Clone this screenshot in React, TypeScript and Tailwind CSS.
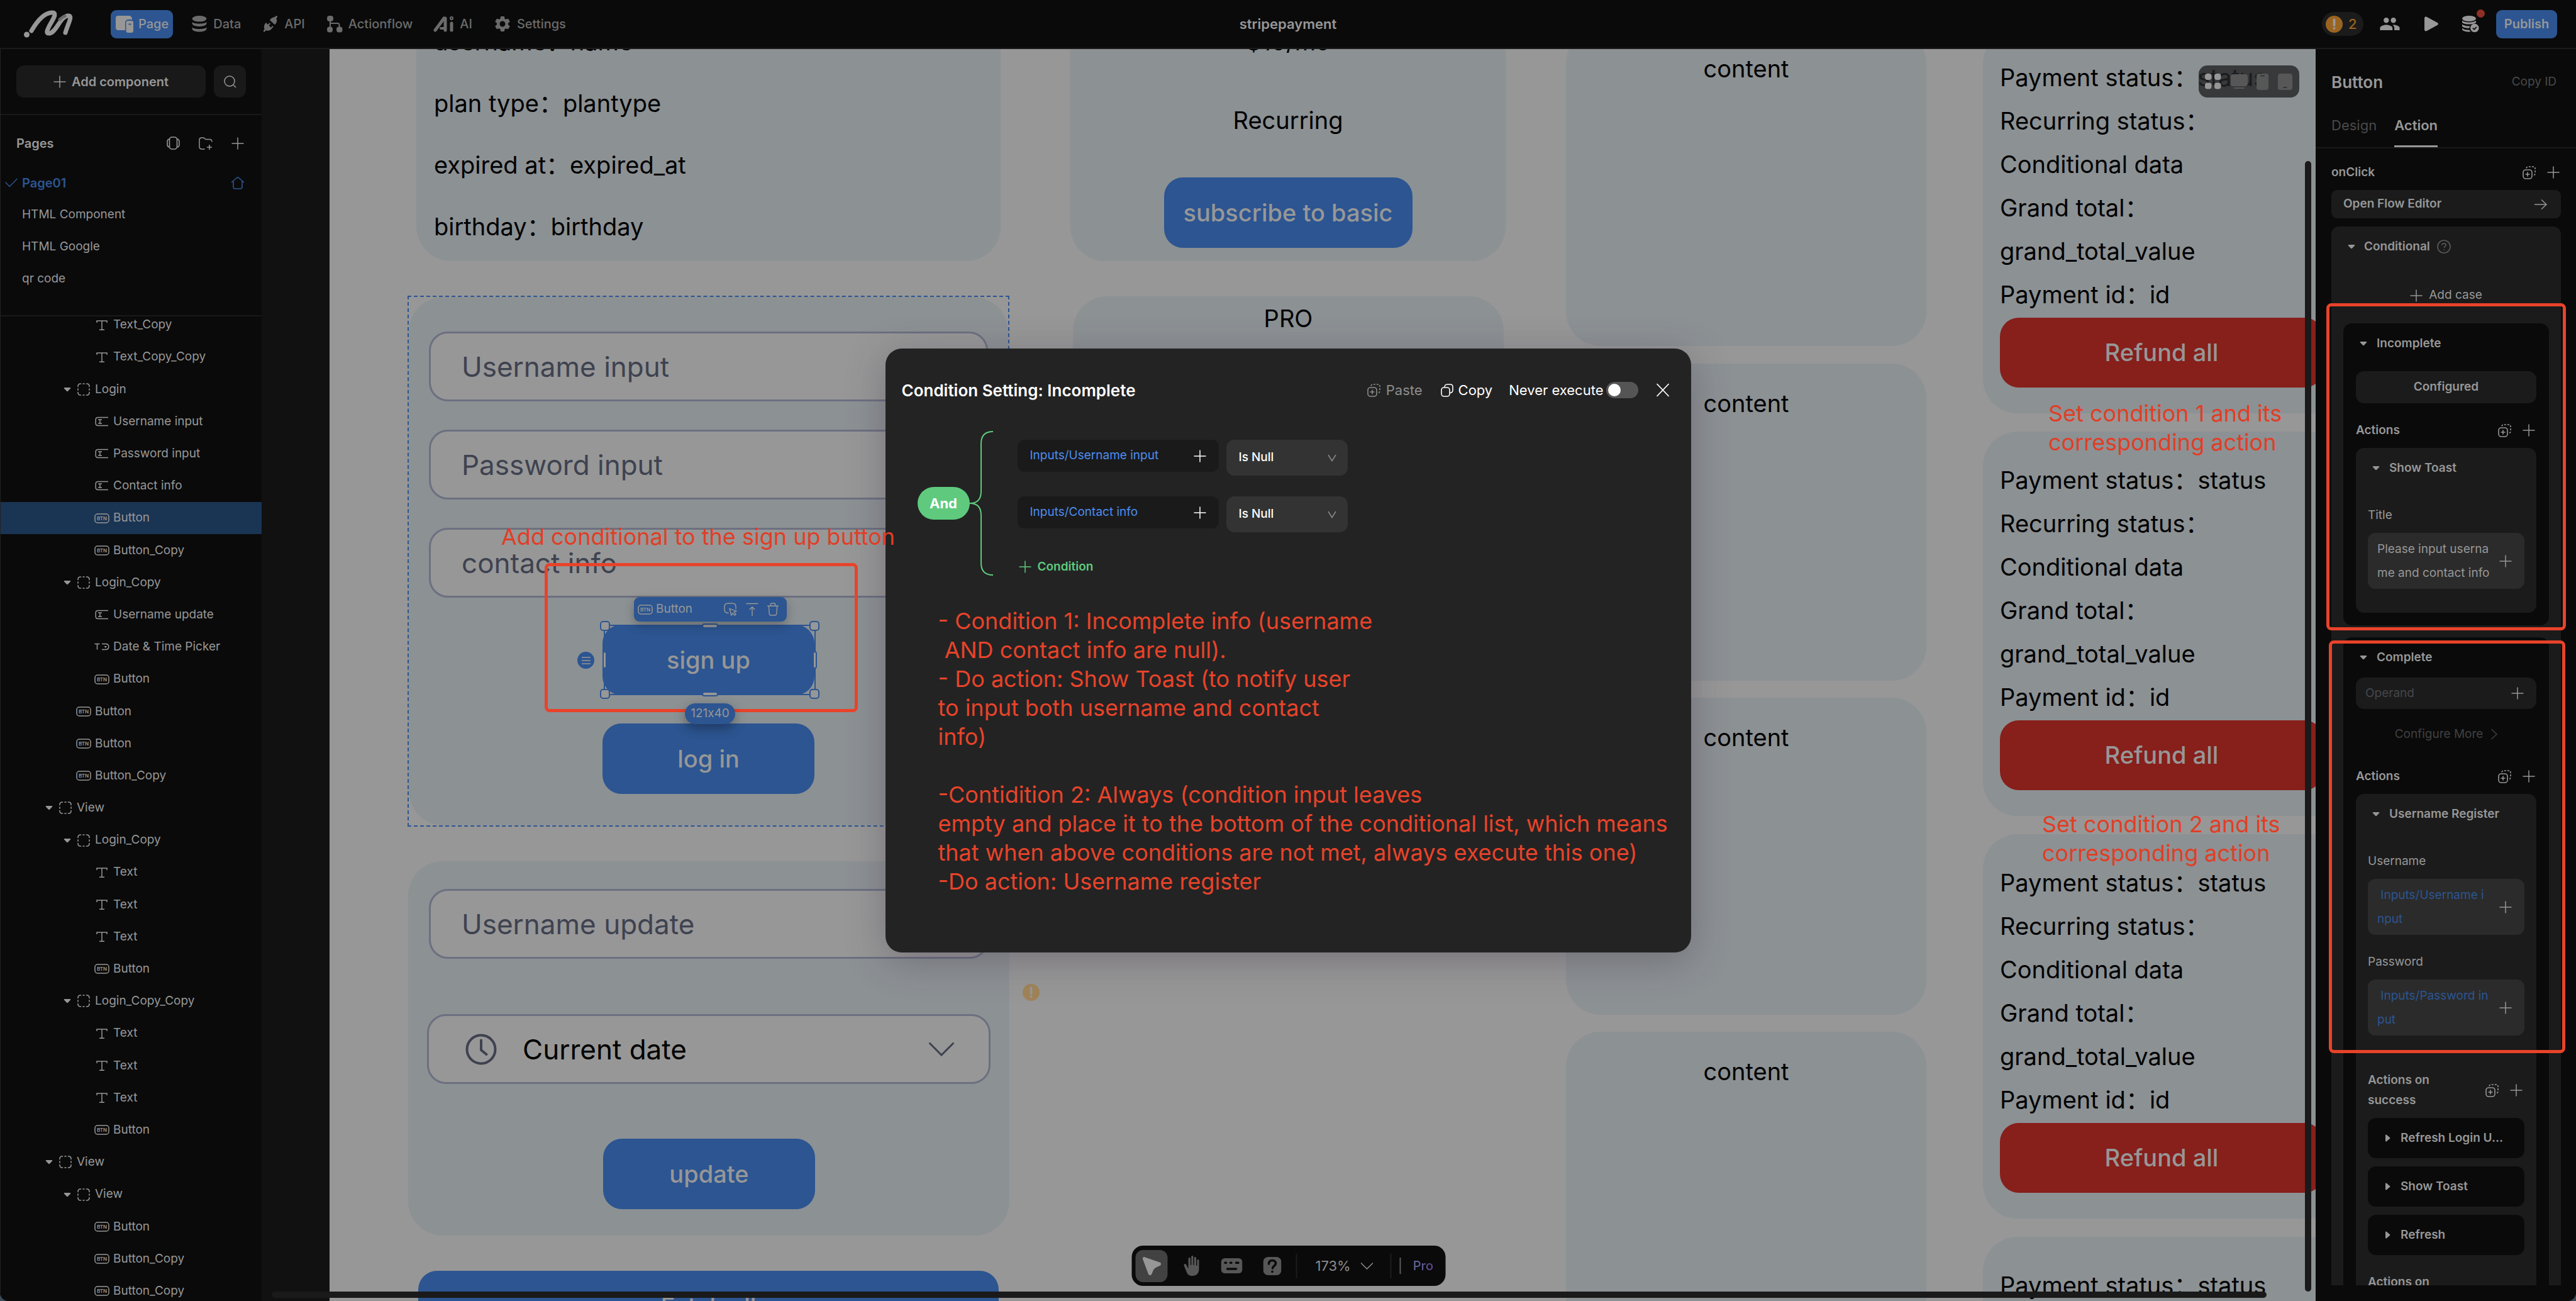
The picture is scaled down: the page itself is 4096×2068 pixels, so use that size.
import React from "react";
import { MdPeople, MdSettings } from "react-icons/md";
import { IoHandRight } from "react-icons/io5";

type IconProps = { className?: string };

/* ---------- icons ---------- */

function Plus({ className = "size-[20px]" }: IconProps) {
  return (
    <svg viewBox="0 0 20 20" className={className} fill="none" stroke="currentColor" strokeWidth="1.5" aria-hidden="true">
      <path d="M10 0.5v19M0.5 10h19" />
    </svg>
  );
}

function Caret({ className = "size-[16px]" }: IconProps) {
  return (
    <svg viewBox="0 0 16 16" className={className} fill="currentColor" aria-hidden="true">
      <path d="M3.6 5h8.8c.9 0 1.1.8.6 1.4L9.2 10.600c-.7.7-1.700.7-2.400 0L3 6.400C2.500 5.800 2.700 5 3.600 5z" />
    </svg>
  );
}

function CaretRight() {
  return (
    <svg viewBox="0 0 16 16" className="size-[16px]" fill="currentColor" aria-hidden="true">
      <path d="M4 3.200v9.600c0 .8.8 1 1.400.6l5.400-4.300c.8-.6.8-1.600 0-2.200L5.400 2.600C4.800 2.200 4 2.400 4 3.200z" />
    </svg>
  );
}

function PasteIcon() {
  return (
    <svg viewBox="0 0 21 21" className="size-[21px]" fill="none" stroke="currentColor" strokeWidth="1.6" aria-hidden="true">
      <rect x="1" y="6" width="14" height="14" rx="4" />
      <path d="M8 9.500v7M4.500 13h7" />
      <path d="M6 3.500C6.300 2 7.300 1 9 1h8c2 0 3 1.200 3 3v7c0 2-.8 3.300-2.500 3.600" strokeDasharray="3 2" />
    </svg>
  );
}

function CopyIcon() {
  return (
    <svg viewBox="0 0 20 21" className="h-[21px] w-[20px]" fill="none" stroke="currentColor" strokeWidth="1.6" aria-hidden="true">
      <rect x="1" y="6" width="13" height="14" rx="4" />
      <path d="M6 5.500C6 3 7.500 1 10 1h5c2.600 0 4 1.600 4 4v5c0 2.500-1.600 4.600-5 4.600" />
    </svg>
  );
}

function Logo() {
  return (
    <svg viewBox="0 0 78 44" className="h-[44px] w-[78px]" fill="none" strokeLinecap="round" strokeLinejoin="round" aria-hidden="true">
      <circle cx="4.500" cy="39" r="4.500" fill="#979797" />
      <path d="M12 33C19 21 31 4 45 4C54 4 46 15 41 24C37 32 34 38 41 37C52 35 58 9 71 9C78 9 70 22 66 36" stroke="#979797" strokeWidth="7" />
      <path d="M57 15c3-3 5-4.500 8-5.500" stroke="#6a6a6a" strokeWidth="5" />
    </svg>
  );
}

function PageIcon() {
  return (
    <svg viewBox="0 0 30 28" className="h-[28px] w-[30px]" fill="currentColor" aria-hidden="true">
      <path d="M5 1h17a5 5 0 0 1 5 5v1h-6a5 5 0 0 0-5 5v12H5a4 4 0 0 1-4-4V5a4 4 0 0 1 4-4z" />
      <path fillRule="evenodd" d="M20.500 9H26a3 3 0 0 1 3 3v13a3 3 0 0 1-3 3h-5.500a3 3 0 0 1-3-3V12a3 3 0 0 1 3-3zm1 4.500v2h4v-2z" />
    </svg>
  );
}

function DataIcon() {
  return (
    <svg viewBox="0 0 28 28" className="size-[28px]" fill="currentColor" aria-hidden="true">
      <ellipse cx="14" cy="5.800" rx="11.500" ry="4.800" />
      <path d="M2.500 11c3 3.500 20 3.500 23 0 .8 5-4 7-11.500 7S1.700 16 2.500 11z" />
      <path d="M2.500 19.500c3 3.500 20 3.500 23 0 .8 5-4 7-11.500 7s-12.300-2-11.500-7z" />
    </svg>
  );
}

function ApiIcon() {
  return (
    <svg viewBox="0 0 28 28" className="size-[28px]" fill="currentColor" aria-hidden="true">
      <path d="M13 8c1.500-2.500 4.500-5 7.500-4.800L23.500.8l1.800 1.600-2 3.200c1.800 3.600.5 7.600-2.500 9.600z" />
      <path d="M7 12l3 3 2.500-2.700 1.500 1.500-2.300 2.800 3 3.200 2.500-2.700 1.500 1.500-2.600 3c-1.800 2.800-6 4.200-9.200 2.600L4.200 27l-1.700-1.700 2.200-3C3 18.600 4.200 14.500 7 12z" />
    </svg>
  );
}

function FlowIcon() {
  return (
    <svg viewBox="0 0 28 28" className="size-[28px]" fill="currentColor" aria-hidden="true">
      <rect x="2" y="1" width="10" height="9" rx="4" />
      <rect x="2" y="18.500" width="9" height="9" rx="4" />
      <rect x="17" y="18.500" width="9.500" height="9" rx="4" />
      <path d="M7 9v10M7 13h11.500c2 0 3 1 3 3v3" fill="none" stroke="currentColor" strokeWidth="2" />
    </svg>
  );
}

function AiIcon() {
  return (
    <svg viewBox="0 0 34 26" className="h-[26px] w-[34px]" fill="none" stroke="currentColor" strokeLinecap="round" strokeLinejoin="round" aria-hidden="true">
      <path d="M3 23L17 4" strokeWidth="5" />
      <path d="M19 4v19" strokeWidth="5" />
      <path d="M12 20h7" strokeWidth="4" />
      <path d="M29 12v11" strokeWidth="5" />
      <circle cx="29" cy="4" r="1" strokeWidth="4" />
    </svg>
  );
}

function WarnIcon({ className = "size-[27px]" }: IconProps) {
  return (
    <svg viewBox="0 0 27 27" className={className} aria-hidden="true">
      <circle cx="13.500" cy="13.500" r="13.500" fill="currentColor" />
      <path d="M13.500 6.500v8.500M13.500 19.800v.3" stroke="#979797" strokeWidth="3.800" strokeLinecap="round" />
    </svg>
  );
}

function DbCheckIcon() {
  return (
    <svg viewBox="0 0 28 28" className="size-[28px]" aria-hidden="true">
      <g fill="#979797">
        <ellipse cx="12" cy="5.500" rx="11" ry="4.500" />
        <path d="M1 8.500c3 4 19 4 22 0v3.200c-3.500 3.800-18.500 3.800-22 0z" />
        <path d="M1 14.500c2.500 2.600 8 3.300 12.500 3-.8 1-1 2.200-1 3.200C8 21 3 20 1 18z" />
        <path d="M1 20.800c2.500 2.400 7 3 11.500 3 .5 1.200 1.200 2 2 2.600C9 27 2 26 1 22.800z" />
        <circle cx="20.800" cy="20.500" r="6.800" />
      </g>
      <path d="M17.800 20.600l2.300 2.200 3.800-3.900" fill="none" stroke="#0a0a0a" strokeWidth="1.800" />
    </svg>
  );
}

function BtnIcon() {
  return (
    <svg viewBox="0 0 24 16" className="h-[16px] w-[24px]" aria-hidden="true">
      <rect x="1" y="1" width="22" height="14" rx="4" fill="none" stroke="currentColor" strokeWidth="1.5" />
      <text x="12" y="11" textAnchor="middle" fontSize="8" fontWeight="600" fill="currentColor">BTN</text>
    </svg>
  );
}

function TextIcon() {
  return (
    <svg viewBox="0 0 20 18" className="h-[18px] w-[20px]" fill="none" stroke="currentColor" strokeWidth="1.500" aria-hidden="true">
      <path d="M2 5V2h16v3M10 2v14M6 16.200h8" />
    </svg>
  );
}

function FieldIcon() {
  return (
    <svg viewBox="0 0 22 16" className="h-[16px] w-[22px]" fill="none" stroke="currentColor" strokeWidth="1.500" aria-hidden="true">
      <path d="M21 1.500H5C2.500 1.500 1.200 2.500 1.200 5v6c0 2.500 1.300 3.500 3.800 3.500h16M5 5h6M8 5v6M5 11h6" />
    </svg>
  );
}

function ViewIcon() {
  return (
    <svg viewBox="0 0 20 20" className="size-[20px]" fill="none" stroke="currentColor" strokeWidth="1.600" strokeLinecap="round" aria-hidden="true">
      <path d="M1 5.500V5c0-2.500 1.500-4 4-4h.5M14.500 1h.5c2.500 0 4 1.500 4 4v.5M19 14.500v.5c0 2.500-1.500 4-4 4h-.5M5.500 19H5c-2.500 0-4-1.500-4-4v-.5M9 1h2M9 19h2M1 9v2M19 9v2" />
    </svg>
  );
}

function PickerIcon() {
  return (
    <svg viewBox="0 0 24 14" className="h-[14px] w-[24px]" fill="none" stroke="currentColor" strokeWidth="1.500" aria-hidden="true">
      <path d="M0.500 2.500h8M4.500 2.500v9M12 2.500h6c3 0 4.800 1.500 4.800 4.500S21 11.500 18 11.500h-6" />
      <path d="M15.500 6h4.500l-2.200 3z" fill="currentColor" stroke="none" />
    </svg>
  );
}

/* ---------- header ---------- */

const navItems = [
  { label: "Data", icon: <DataIcon /> },
  { label: "API", icon: <ApiIcon /> },
  { label: "Actionflow", icon: <FlowIcon /> },
  { label: "AI", icon: <AiIcon /> },
  { label: "Settings", icon: <MdSettings className="size-[30px]" /> },
];

function Header() {
  return (
    <header className="relative flex h-[78px] shrink-0 items-center justify-between border-b-2 border-[#1b1b1b] bg-[#0a0a0a] pr-[30px] pl-[38px] text-[20px]">
      <nav className="flex items-center">
        <Logo />
        <button className="ml-[60px] flex h-[45px] items-center gap-[7px] rounded-[9px] bg-[#2c5591] px-[7px] font-medium text-[#979797]">
          <PageIcon />
          Page
        </button>
        <div className="ml-[28px] flex items-center gap-[33px]">
          {navItems.map((item) => (
            <button key={item.label} className="flex items-center gap-[8px] font-medium text-[#6b6b6b]">
              {item.icon}
              {item.label}
            </button>
          ))}
        </div>
      </nav>
      <h1 className="absolute left-1/2 -translate-x-1/2 text-[22px] font-semibold text-[#979797]">stripepayment</h1>
      <div className="flex items-center">
        <button className="flex h-[38px] w-[66px] items-center gap-[9px] rounded-full bg-[#1b1b1b] pl-[6px] text-[22px] font-medium text-[#9a6420]">
          <WarnIcon />
          2
        </button>
        <button aria-label="Members" className="ml-[25px] text-[#979797]">
          <MdPeople className="size-[34px]" />
        </button>
        <button aria-label="Preview" className="ml-[38px] text-[#979797]">
          <svg viewBox="0 0 22 24" className="h-[24px] w-[22px]" fill="currentColor" aria-hidden="true">
            <path d="M0 3C0 .8 1.500 0 3.500.8l17 9.200c2 1.200 2 2.800 0 4l-17 9.200C1.500 24 0 23.200 0 21z" />
          </svg>
        </button>
        <button aria-label="Sync status" className="relative ml-[37px]">
          <DbCheckIcon />
          <span className="absolute -top-[9px] -right-[9px] size-[13px] rounded-full bg-[#8f3026]" />
        </button>
        <button className="ml-[27px] h-[45px] w-[97px] rounded-[9px] bg-[#2c5591] font-semibold text-[#979797]">Publish</button>
      </div>
    </header>
  );
}

/* ---------- left sidebar ---------- */

type Kind = "text" | "view" | "field" | "btn" | "picker";
type Row = { depth: 1 | 2 | 3; kind: Kind; label: string; selected?: boolean };

const tree: Row[] = [
  { depth: 3, kind: "text", label: "Text_Copy" },
  { depth: 3, kind: "text", label: "Text_Copy_Copy" },
  { depth: 2, kind: "view", label: "Login" },
  { depth: 3, kind: "field", label: "Username input" },
  { depth: 3, kind: "field", label: "Password input" },
  { depth: 3, kind: "field", label: "Contact info" },
  { depth: 3, kind: "btn", label: "Button", selected: true },
  { depth: 3, kind: "btn", label: "Button_Copy" },
  { depth: 2, kind: "view", label: "Login_Copy" },
  { depth: 3, kind: "field", label: "Username update" },
  { depth: 3, kind: "picker", label: "Date & Time Picker" },
  { depth: 3, kind: "btn", label: "Button" },
  { depth: 2, kind: "btn", label: "Button" },
  { depth: 2, kind: "btn", label: "Button" },
  { depth: 2, kind: "btn", label: "Button_Copy" },
  { depth: 1, kind: "view", label: "View" },
  { depth: 2, kind: "view", label: "Login_Copy" },
  { depth: 3, kind: "text", label: "Text" },
  { depth: 3, kind: "text", label: "Text" },
  { depth: 3, kind: "text", label: "Text" },
  { depth: 3, kind: "btn", label: "Button" },
  { depth: 2, kind: "view", label: "Login_Copy_Copy" },
  { depth: 3, kind: "text", label: "Text" },
  { depth: 3, kind: "text", label: "Text" },
  { depth: 3, kind: "text", label: "Text" },
  { depth: 3, kind: "btn", label: "Button" },
  { depth: 1, kind: "view", label: "View" },
  { depth: 2, kind: "view", label: "View" },
  { depth: 3, kind: "btn", label: "Button" },
  { depth: 3, kind: "btn", label: "Button_Copy" },
  { depth: 3, kind: "btn", label: "Button_Copy" },
];

const indent = { 1: "pl-[69px]", 2: "pl-[98px]", 3: "pl-[127px]" };

const kindIcon: Record<Kind, React.ReactNode> = {
  text: <TextIcon />,
  view: <ViewIcon />,
  field: <FieldIcon />,
  btn: <BtnIcon />,
  picker: <PickerIcon />,
};

function TreeRow({ row }: { row: Row }) {
  return (
    <button
      className={`flex h-[51px] w-full items-center gap-[4px] text-left ${indent[row.depth]} ${row.selected ? "bg-[#1a3453]" : ""}`}
    >
      <span className="w-[16px]">{row.kind === "view" && <Caret />}</span>
      <span className="flex w-[28px] justify-center">{kindIcon[row.kind]}</span>
      {row.label}
    </button>
  );
}

function Sidebar() {
  return (
    <aside className="flex w-[416px] shrink-0 flex-col overflow-hidden border-l border-[#222] bg-[#0a0a0a] text-[19px] text-[#979797]">
      <div className="flex gap-[13px] border-b-2 border-[#191919] px-[25px] py-[26px]">
        <button className="flex h-[51px] flex-1 items-center justify-center gap-[9px] rounded-[12px] bg-[#191919] text-[20px] font-semibold">
          <Plus />
          Add component
        </button>
        <button aria-label="Search" className="flex size-[51px] items-center justify-center rounded-[12px] bg-[#191919]">
          <svg viewBox="0 0 20 20" className="size-[20px]" fill="none" stroke="currentColor" strokeWidth="1.500" aria-hidden="true">
            <circle cx="9" cy="9" r="8" />
            <path d="M14.800 14.800L19 19" />
          </svg>
        </button>
      </div>
      <div className="flex h-[320px] shrink-0 flex-col border-b-2 border-[#191919] pt-[19px]">
        <div className="flex h-[51px] items-center justify-between pr-[28px] pl-[25px]">
          <h2 className="text-[20px] font-semibold">Pages</h2>
          <div className="flex gap-[30px]">
            <button aria-label="Page template">
              <svg viewBox="0 0 21 21" className="size-[21px]" fill="none" stroke="currentColor" strokeWidth="1.600" aria-hidden="true">
                <rect x="4.500" y="1" width="12" height="19" rx="4" />
                <path d="M4.500 4C2 4.500 1 5.500 1 8v5c0 2.500 1 3.500 3.500 4M16.500 4C19 4.500 20 5.500 20 8v5c0 2.500-1 3.500-3.500 4" />
              </svg>
            </button>
            <button aria-label="New folder">
              <svg viewBox="0 0 22 22" className="size-[22px]" fill="none" stroke="currentColor" strokeWidth="1.500" aria-hidden="true">
                <path d="M9.500 20H5c-3 0-4-1.200-4-4V5.500C1 3 2 2 4.500 2H8l3 2.500h6c2.800 0 4 1 4 4M17 13v8M13 17h8" />
              </svg>
            </button>
            <button aria-label="New page">
              <Plus />
            </button>
          </div>
        </div>
        <div className="mt-[12px] flex flex-col">
          <button className="flex h-[51px] items-center pr-[27px] pl-[6px] font-semibold text-[#2c5591]">
            <svg viewBox="0 0 22 16" className="h-[15px] w-[22px]" fill="none" stroke="currentColor" strokeWidth="1.500" aria-hidden="true">
              <path d="M1 7l7 7.500L21 1" />
            </svg>
            <span className="ml-[6px] text-[20px]">Page01</span>
            <svg viewBox="0 0 22 20" className="ml-auto h-[20px] w-[22px]" fill="none" stroke="currentColor" strokeWidth="1.600" aria-hidden="true">
              <path d="M1 9L9 2c1.300-1.100 2.700-1.100 4 0l8 7M4 7v9c0 2 1 3 3 3h8c2 0 3-1 3-3V7" />
            </svg>
          </button>
          {["HTML Component", "HTML Google", "qr code"].map((p) => (
            <button key={p} className="h-[51px] pl-[34px] text-left">
              {p}
            </button>
          ))}
        </div>
      </div>
      <div className="flex min-h-0 flex-1 flex-col overflow-hidden">
        <div className="-mt-[12px] -mb-[10px] flex flex-1 flex-col justify-between">
          {tree.map((row, i) => (
            <TreeRow key={i} row={row} />
          ))}
        </div>
      </div>
    </aside>
  );
}

/* ---------- canvas ---------- */

const card = "absolute rounded-[55px] bg-[#8c9194]";
const blueButton = "rounded-[30px] bg-[#2c5591] text-[38px] font-medium text-[#979797]";
const field = "block h-[111px] w-full rounded-[30px] border-[3px] border-[#6c7080] bg-[#979797]";

function CanvasInput({ label }: { label: string }) {
  return (
    <input
      aria-label={label}
      placeholder={label}
      className={`${field} px-[49px] text-[44px] text-[#3e4250] placeholder:text-[#3e4250] placeholder:opacity-100`}
    />
  );
}

const paymentLines = [
  "Payment status：status",
  "Recurring status：",
  "Conditional data",
  "Grand total：",
  "grand_total_value",
  "Payment id：id",
];

function PaymentCard({ className }: { className: string }) {
  return (
    <section className={`${card} left-[2629px] h-[611px] w-[600px] px-[27px] pt-[43px] ${className}`}>
      <div className="text-[38px] leading-[69px] text-black">
        {paymentLines.map((l) => (
          <p key={l}>{l}</p>
        ))}
      </div>
      <button className="mt-[2px] h-[111px] w-[514px] rounded-[30px] bg-[#871f1b] text-[38px] font-medium text-[#979797]">
        Refund all
      </button>
    </section>
  );
}

function ContentCard({ className }: { className: string }) {
  return (
    <section className={`${card} left-[1966px] h-[504px] w-[573px] pt-[39px] text-center text-[38px] leading-[48px] text-black ${className}`}>
      content
    </section>
  );
}

const corners = [
  "-top-[8px] -left-[8px]",
  "-top-[8px] -right-[8px]",
  "-bottom-[8px] -left-[8px]",
  "-bottom-[8px] -right-[8px]",
];
const edges = [
  "-top-[4px] left-1/2 h-[8px] w-[26px] -translate-x-1/2",
  "-bottom-[4px] left-1/2 h-[8px] w-[26px] -translate-x-1/2",
  "top-1/2 -left-[4px] h-[28px] w-[7px] -translate-y-1/2",
  "top-1/2 -right-[4px] h-[28px] w-[7px] -translate-y-1/2",
];

function LoginCard() {
  return (
    <section className="absolute top-[392px] left-[124px] h-[844px] w-[957px] border-2 border-dashed border-[#2c5591]">
      <div className="flex h-full flex-col rounded-[55px] bg-[#8c9194] px-[32px] pt-[55px]">
        <div className="flex flex-col gap-[45px]">
          <CanvasInput label="Username input" />
          <CanvasInput label="Password input" />
          <CanvasInput label="contact info" />
        </div>
        <div className="relative mt-[43px] ml-[276px] h-[112px] w-[337px]">
          <button className={`h-full w-full ${blueButton}`}>sign up</button>
          <div className="pointer-events-none absolute inset-0 translate-x-[2px] border-2 border-[#2c5591]">
            {corners.map((c) => (
              <span key={c} className={`absolute size-[16px] rounded-[5px] border-2 border-[#2c5591] bg-[#979797] ${c}`} />
            ))}
            {edges.map((c) => (
              <span key={c} className={`absolute rounded-[4px] border-2 border-[#2c5591] bg-[#979797] ${c}`} />
            ))}
          </div>
          <div className="absolute -top-[44px] left-[50px] flex h-[39px] w-[243px] items-center rounded-[9px] bg-[#2c5591] px-[6px] text-[19px] text-[#979797] shadow-[0_6px_16px_rgba(0,0,0,0.25)]">
            <BtnIcon />
            <span className="ml-[5px]">Button</span>
            <div className="ml-auto flex items-center gap-[14px] pr-[7px]">
              <button aria-label="Select parent">
                <svg viewBox="0 0 22 22" className="size-[21px]" fill="none" stroke="currentColor" strokeWidth="1.500" aria-hidden="true">
                  <path d="M8 17H7c-4 0-6-2-6-5V7c0-4 2-6 6-6h7c4 0 6 2 6 6v4" />
                  <path d="M9.500 10l3 11 2.300-3.500 3.200 3.500 2-1.800-3-3.700 4-1.500z" />
                </svg>
              </button>
              <button aria-label="Pin to top">
                <svg viewBox="0 0 20 22" className="h-[21px] w-[20px]" fill="none" stroke="currentColor" strokeWidth="1.500" aria-hidden="true">
                  <path d="M0 1.500h20M10 22V7M5.500 11.500L10 7l4.500 4.500" />
                </svg>
              </button>
              <button aria-label="Delete">
                <svg viewBox="0 0 19 22" className="h-[21px] w-[18px]" fill="none" stroke="currentColor" strokeWidth="1.500" aria-hidden="true">
                  <path d="M0 5.500h19M5.500 5.500V3.500c0-1.700.6-2.500 2.300-2.500h3.400c1.700 0 2.300.8 2.300 2.500v2M2.500 5.500L3.300 18c.2 2 1 3 3 3h6.400c2 0 2.800-1 3-3l.8-12.500" />
                </svg>
              </button>
            </div>
          </div>
          <button aria-label="Layers" className="absolute top-[43px] -left-[40px] flex size-[27px] items-center justify-center rounded-full bg-[#2c5591] text-[#979797]">
            <svg viewBox="0 0 14 14" className="size-[14px]" stroke="currentColor" strokeWidth="1.500" aria-hidden="true">
              <path d="M0 2h14M0 7h14M0 12h14" />
            </svg>
          </button>
          <span className="absolute top-[125px] left-[131px] z-10 flex h-[33px] w-[80px] items-center justify-center rounded-full bg-[#2c5591] text-[19px] text-[#979797] shadow-[0_6px_18px_rgba(0,0,0,0.35)] [font-feature-settings:'calt'_0]">
            121x40
          </span>
        </div>
        <button className={`mt-[45px] ml-[276px] h-[112px] w-[337px] ${blueButton}`}>log in</button>
      </div>
    </section>
  );
}

function DateCard() {
  return (
    <section className={`${card} top-[1291px] left-[125px] h-[595px] w-[956px] pt-[44px]`}>
      <div className="px-[33px]">
        <CanvasInput label="Username update" />
      </div>
      <div className="px-[30px] pt-[88px]">
        <button className={`${field} text-left`}>
          <span className="flex items-center pr-[55px] pl-[58px] text-[44px] text-black">
            <svg viewBox="0 0 50 50" className="size-[50px]" fill="none" stroke="#3e4250" strokeWidth="4" strokeLinecap="round" aria-hidden="true">
              <circle cx="25" cy="25" r="22.500" />
              <path d="M25 10.500V26l8.500 7" />
            </svg>
            <span className="ml-[41px]">Current date</span>
            <svg viewBox="0 0 40 22" className="ml-auto h-[22px] w-[40px]" fill="none" stroke="#3e4250" strokeWidth="3" strokeLinecap="round" aria-hidden="true">
              <path d="M1.500 1.500L20 20 38.500 1.500" />
            </svg>
          </span>
        </button>
      </div>
      <button className={`mt-[87px] ml-[310px] h-[112px] w-[337px] ${blueButton}`}>update</button>
    </section>
  );
}

function ToolDivider({ className }: { className: string }) {
  return <span className={`w-[2px] ${className}`} />;
}

function BottomToolbar() {
  return (
    <div className="absolute bottom-[24px] left-1/2 flex h-[64px] w-[499px] -translate-x-1/2 items-center rounded-[18px] bg-[#0a0a0a] pl-[6px] text-[22px] text-[#8c8c8c]">
      <button aria-label="Select" className="flex size-[51px] items-center justify-center rounded-[12px] bg-[#424242]">
        <svg viewBox="0 0 30 29" className="h-[29px] w-[30px]" fill="#979797" aria-hidden="true">
          <path d="M3.500.2l24 8.300c2.800 1.200 2.800 4.200 0 5.500l-5 2.200c-3 1.500-4.500 3-5.700 6l-2 5c-1 2.400-4.400 2.400-5.300 0L.6 3.500C0 1.300 1.400-.4 3.500.2z" />
        </svg>
      </button>
      <button aria-label="Pan" className="ml-[22px] text-[#575757]">
        <IoHandRight className="size-[32px]" />
      </button>
      <button aria-label="Shortcuts" className="ml-[31px] text-[#575757]">
        <svg viewBox="0 0 34 24" className="h-[24px] w-[34px]" aria-hidden="true">
          <rect width="34" height="24" rx="6" fill="currentColor" />
          <path d="M6.500 7.200h1.500M15 7.200h1.500M24 7.200h3.500M10 17h14" stroke="#0a0a0a" strokeWidth="3.500" strokeLinecap="round" />
        </svg>
      </button>
      <button aria-label="Help" className="ml-[33px] text-[#575757]">
        <svg viewBox="0 0 29 29" className="size-[29px]" fill="none" aria-hidden="true">
          <rect width="29" height="29" rx="8" fill="currentColor" />
          <path d="M9 11c0-3.500 2.500-5.500 5.500-5.500s5.500 2 5.500 5c0 4-5 3.500-5 7.500M14.500 23.300v.2" stroke="#0a0a0a" strokeWidth="3.600" strokeLinecap="round" />
        </svg>
      </button>
      <ToolDivider className="ml-[23px] h-[39px] bg-[#1c1c1c]" />
      <button className="ml-[29px] flex items-center gap-[16px]">
        173%
        <svg viewBox="0 0 20 11" className="h-[11px] w-[20px]" fill="none" stroke="currentColor" strokeWidth="1.500" aria-hidden="true">
          <path d="M.5.5L10 10 19.500.5" />
        </svg>
      </button>
      <ToolDivider className="ml-[27px] h-[39px] bg-[#1c1c1c]" />
      <ToolDivider className="ml-[13px] h-[26px] bg-[#5a5a5a]" />
      <button className="ml-[19px] bg-gradient-to-r from-[#5a6a98] to-[#5d4590] bg-clip-text text-[20px] font-medium text-transparent">Pro</button>
    </div>
  );
}

function DeviceBar() {
  return (
    <div className="absolute top-[26px] right-[26px] flex h-[51px] w-[160px] items-center justify-between rounded-[14px] bg-[#222324]/80 pr-[11px] pl-[10px] text-[#575757]">
      <button aria-label="All sizes">
        <svg viewBox="0 0 26 25" className="h-[25px] w-[26px]" fill="#979797" aria-hidden="true">
          <rect width="10.500" height="10" rx="4" />
          <rect x="15" width="10.500" height="10" rx="4" />
          <rect y="14.500" width="10.500" height="10" rx="4" />
          <rect x="15" y="14.500" width="10.500" height="10" rx="4" />
        </svg>
      </button>
      <button aria-label="Desktop">
        <svg viewBox="0 0 27 23" className="h-[23px] w-[27px]" fill="currentColor" aria-hidden="true">
          <rect width="27" height="19" rx="4" />
          <rect x="5" y="21" width="17" height="2" rx="1" />
        </svg>
      </button>
      <button aria-label="Phone">
        <svg viewBox="0 0 19 26" className="h-[26px] w-[19px]" aria-hidden="true">
          <rect width="19" height="26" rx="4" fill="currentColor" />
          <path d="M6 3.500h7" stroke="#353637" strokeWidth="2" />
        </svg>
      </button>
      <button aria-label="Tablet">
        <svg viewBox="0 0 23 26" className="h-[26px] w-[23px]" aria-hidden="true">
          <rect width="23" height="26" rx="4" fill="currentColor" />
          <path d="M8.500 22h6" stroke="#353637" strokeWidth="2" />
        </svg>
      </button>
    </div>
  );
}

const note = "pointer-events-none absolute text-[36px] leading-[46px] whitespace-pre text-[#e03e26]";

function Canvas() {
  return (
    <main className="relative min-w-0 flex-1 overflow-hidden bg-[#111111] pl-[108px]">
      <div className="relative h-full bg-[#979797]">
        <section className={`${card} -top-[200px] left-[138px] h-[537px] w-[929px]`}>
          <div className="flex flex-col gap-[50px] pt-[164px] pl-[28px] text-[38px] leading-[48px] text-black">
            <p>username：name</p>
            <p>plan type：plantype</p>
            <p>expired at：expired_at</p>
            <p>birthday：birthday</p>
          </div>
        </section>
        <LoginCard />
        <DateCard />
        <button className={`absolute top-[1942px] left-[141px] h-[112px] w-[923px] ${blueButton}`}>Fetch all</button>
        <WarnIcon className="absolute top-[1486px] left-[1102px] size-[27px] text-[#a08458]" />

        <section className={`${card} -top-[200px] left-[1178px] flex h-[537px] w-[692px] flex-col items-center pt-[164px] text-[38px] leading-[48px] text-black`}>
          <p>$10/mo</p>
          <p className="mt-[77px]">Recurring</p>
          <button className={`mt-[67px] h-[112px] w-[395px] ${blueButton}`}>subscribe to basic</button>
        </section>
        <section className={`${card} top-[393px] left-[1182px] h-[537px] w-[685px] pt-[11px] text-center text-[38px] leading-[48px] text-black`}>
          PRO
        </section>

        <ContentCard className="-top-[32px]" />
        <ContentCard className="top-[500px]" />
        <ContentCard className="top-[1031px]" />
        <ContentCard className="top-[1562px]" />

        <PaymentCard className="-top-[32px]" />
        <PaymentCard className="top-[608px]" />
        <PaymentCard className="top-[1248px]" />
        <PaymentCard className="top-[1888px]" />
      </div>
      <div className="absolute top-[178px] right-[7px] bottom-[15px] w-[10px] rounded-full bg-[#1a1a1a]" />
      <div className="absolute right-[78px] bottom-[5px] left-[16px] h-[10px] rounded-full bg-[#1a1a1a]" />
      <DeviceBar />
      <BottomToolbar />
      <p className={`${note} top-[556px] left-[2841px]`}>{"Set condition 1 and its\ncorresponding action"}</p>
      <p className={`${note} top-[1209px] left-[2831px]`}>{"Set condition 2 and its\ncorresponding action"}</p>
    </main>
  );
}

/* ---------- right panel ---------- */

function SectionActions({ title }: { title: string }) {
  return (
    <div className="flex h-[28px] items-center justify-between pr-[2px]">
      <h3 className="font-semibold">{title}</h3>
      <div className="flex shrink-0 gap-[18px]">
        <button aria-label={`Paste into ${title}`}>
          <PasteIcon />
        </button>
        <button aria-label={`Add to ${title}`}>
          <Plus />
        </button>
      </div>
    </div>
  );
}

function Fold({ title }: { title: string }) {
  return (
    <button className="flex h-[64px] w-full items-center gap-[13px] pl-[24px] text-left font-semibold">
      <Caret />
      {title}
    </button>
  );
}

function ValueField({ label, value, linked }: { label: string; value: string; linked?: boolean }) {
  return (
    <label className="mt-[27px] block leading-[32px]">
      {label}
      <span className="mt-[12px] flex h-[89px] items-center justify-between rounded-[12px] bg-[#2b2b2b] pr-[20px] pl-[15px]">
        <textarea
          rows={2}
          defaultValue={value}
          className={`h-[76px] w-[190px] resize-none overflow-hidden bg-transparent leading-[38px] whitespace-pre outline-none ${linked ? "text-[#2c5591]" : ""}`}
        />
        <Plus />
      </span>
    </label>
  );
}

function OutcomeActions({ title }: { title: string }) {
  return (
    <div className="flex items-center justify-between pr-[3px]">
      <h3 className="w-[140px] leading-[32px] font-semibold">{title}</h3>
      <div className="flex gap-[18px]">
        <button aria-label={`Paste into ${title}`}>
          <PasteIcon />
        </button>
        <button aria-label={`Add to ${title}`}>
          <Plus />
        </button>
      </div>
    </div>
  );
}

function Inspector() {
  return (
    <aside className="relative flex w-[414px] shrink-0 flex-col overflow-hidden bg-[#0a0a0a] pb-[25px] text-[19px] text-[#979797]">
      <div className="flex h-[105px] shrink-0 items-center justify-between pr-[31px] pl-[25px]">
        <h2 className="text-[26px] font-semibold">Button</h2>
        <button className="text-[#494949]">Copy ID</button>
      </div>
      <div className="flex h-[53px] shrink-0 items-stretch gap-[28px] border-b-2 border-[#191919] pl-[25px] text-[22px]" role="tablist">
        <button role="tab" aria-selected="false" className="pb-[19px] text-[#494949]">Design</button>
        <button role="tab" aria-selected="true" className="border-b-[3px] border-[#979797] pb-[16px] font-semibold">Action</button>
      </div>
      <div className="flex min-h-0 flex-1 flex-col overflow-hidden pr-[24px] pl-[25px]">
        <div className="pt-[24px]">
          <SectionActions title="onClick" />
        </div>
        <button className="mt-[14px] flex h-[45px] shrink-0 items-center justify-between rounded-[9px] bg-[#1b1b1b] pr-[22px] pl-[19px] font-semibold">
          Open Flow Editor
          <svg viewBox="0 0 20 20" className="size-[20px]" fill="none" stroke="currentColor" strokeWidth="1.500" aria-hidden="true">
            <path d="M0 10h19M11 2.500l8 7.500-8 7.500" />
          </svg>
        </button>
        <div className="mt-[13px] flex flex-col rounded-t-[12px] bg-[#1b1b1b] px-[19px]">
          <button className="flex h-[64px] items-center text-left font-semibold">
            <span className="ml-[5px]"><Caret /></span>
            <span className="ml-[12px]">Conditional</span>
            <svg viewBox="0 0 22 22" className="ml-[11px] size-[22px]" fill="none" stroke="#5a5a5a" strokeWidth="1.600" aria-hidden="true">
              <circle cx="11" cy="11" r="10" />
              <path d="M7.800 8.800C7.800 7 9 6 11 6s3.200 1 3.200 2.600c0 2.400-3 2-3 4.400M11.100 15.300v1.500" />
            </svg>
          </button>
          <button className="mt-[23px] flex h-[45px] items-center justify-center gap-[10px]">
            <Plus />
            Add case
          </button>
          <div className="mt-[22px] rounded-[14px] bg-[#0a0a0a] px-[20px] pb-[20px]">
            <div className="-ml-[20px]">
              <Fold title="Incomplete" />
            </div>
            <button className="mt-[12px] block h-[51px] w-full rounded-[13px] bg-[#1b1b1b] font-semibold">Configured</button>
            <div className="mt-[29px]">
              <SectionActions title="Actions" />
            </div>
            <div className="mt-[14px] rounded-[13px] bg-[#1b1b1b] px-[19px] pb-[38px]">
              <div className="-ml-[19px]">
                <Fold title="Show Toast" />
              </div>
              <ValueField label="Title" value={"Please input userna\nme and contact info"} />
            </div>
          </div>
          <div className="mt-[19px] rounded-t-[14px] bg-[#0a0a0a] px-[20px]">
            <div className="-ml-[20px]">
              <Fold title="Complete" />
            </div>
            <label className="flex h-[50px] items-center justify-between rounded-[13px] bg-[#1b1b1b] pr-[20px] pl-[15px]">
              <input aria-label="Operand" placeholder="Operand" className="w-[180px] bg-transparent outline-none placeholder:text-[#45464c] placeholder:opacity-100" />
              <Plus />
            </label>
            <button className="mt-[24px] flex h-[32px] w-full items-center justify-center gap-[13px] text-[#404040]">
              Configure More
              <svg viewBox="0 0 10 18" className="h-[18px] w-[10px]" fill="none" stroke="currentColor" strokeWidth="1.500" aria-hidden="true">
                <path d="M.5 1L9 9 .5 17" />
              </svg>
            </button>
            <div className="mt-[37px]">
              <SectionActions title="Actions" />
            </div>
            <div className="mt-[14px] rounded-t-[13px] bg-[#1b1b1b] px-[19px]">
              <div className="-ml-[19px]">
                <Fold title="Username Register" />
              </div>
              <ValueField label="Username" value={" Inputs/Username i\nnput"} linked />
              <ValueField label="Password" value={" Inputs/Password in\nput"} linked />
              <div className="mt-[55px]">
                <OutcomeActions title="Actions on success" />
              </div>
              <div className="mt-[12px] flex flex-col gap-[13px]">
                {["Refresh Login U...", "Show Toast", "Refresh"].map((t) => (
                  <button key={t} className="flex h-[64px] items-center gap-[12px] rounded-[13px] bg-[#0a0a0a] pl-[24px] text-left font-semibold">
                    <CaretRight />
                    {t}
                  </button>
                ))}
              </div>
              <div className="mt-[27px]">
                <OutcomeActions title="Actions on failure" />
              </div>
            </div>
          </div>
        </div>
      </div>
      <span className="pointer-events-none absolute top-[404px] left-[17px] h-[520px] w-[381px] rounded-[8px] border-[5px] border-[#e8432a]" />
      <span className="pointer-events-none absolute top-[940px] left-[21px] h-[656px] w-[376px] rounded-[8px] border-[5px] border-[#e8432a]" />
    </aside>
  );
}

/* ---------- modal ---------- */

function ConditionRow({ operand }: { operand: string }) {
  return (
    <div className="flex items-start gap-[12px]">
      <button className="flex h-[51px] w-[320px] items-center justify-between rounded-[11px] bg-[#1a1a1a] pr-[20px] pl-[20px] text-[#4d8df0]">
        {operand}
        <Plus className="size-[20px] text-white" />
      </button>
      <label className="relative">
        <select aria-label={`Operator for ${operand}`} className="h-[57px] w-[193px] appearance-none rounded-[13px] bg-[#333333] pl-[20px] font-medium text-white">
          <option>Is Null</option>
        </select>
        <svg viewBox="0 0 14 12" className="pointer-events-none absolute top-[23px] right-[18px] h-[12px] w-[14px]" fill="none" stroke="#8a8a8a" strokeWidth="1.500" aria-hidden="true">
          <path d="M1 1l6 9.500L13 1" />
        </svg>
      </label>
    </div>
  );
}

const explanation = `- Condition 1: Incomplete info (username
 AND contact info are null).
- Do action: Show Toast (to notify user
to input both username and contact
info)

-Contidition 2: Always (condition input leaves
empty and place it to the bottom of the conditional list, which means
that when above conditions are not met, always execute this one)
-Do action: Username register`;

function Modal() {
  return (
    <div className="pointer-events-none absolute inset-0 flex items-center justify-center">
      <div role="dialog" aria-label="Condition Setting" className="pointer-events-auto h-[960px] w-[1281px] rounded-[26px] bg-[#232323] pt-[40px] text-white shadow-[0_12px_60px_rgba(60,50,70,0.35)]">
        <div className="flex h-[52px] items-center pr-[35px] pl-[26px] text-[22px]">
          <h2 className="mr-auto text-[26px] font-semibold">Condition Setting: Incomplete</h2>
          <button className="flex items-center gap-[9px] text-[#8d8d8d]">
            <PasteIcon />
            Paste
          </button>
          <button className="ml-[29px] flex items-center gap-[8px]">
            <CopyIcon />
            Copy
          </button>
          <label className="ml-[26px] flex items-center gap-[4px]">
            Never execute
            <input
              type="checkbox"
              role="switch"
              className="h-[26px] w-[51px] appearance-none rounded-full bg-[#555555] before:m-[3px] before:block before:size-[20px] before:rounded-full before:bg-white"
            />
          </label>
          <button aria-label="Close" className="ml-[29px]">
            <svg viewBox="0 0 20 22" className="h-[22px] w-[20px]" fill="none" stroke="currentColor" strokeWidth="1.600" aria-hidden="true">
              <path d="M.5 1l19 20M19.500 1l-19 20" />
            </svg>
          </button>
        </div>
        <div className="mt-[39px] flex h-[230px] items-start pl-[51px] text-[19px]">
          <button className="mt-[89px] h-[52px] w-[83px] rounded-full bg-[#5fca7e] text-[22px] font-bold">And</button>
          <svg viewBox="0 0 37 230" className="h-[230px] w-[37px]" fill="none" stroke="#5fca7e" strokeWidth="2" aria-hidden="true">
            <path d="M37 1C25 1 18 7 18 20v76c0 13-7 19-18 19 11 0 18 6 18 19v76c0 13 7 19 19 19" />
          </svg>
          <div className="flex flex-col gap-[33px] pt-[14px] pl-[39px]">
            <ConditionRow operand="Inputs/Username input" />
            <ConditionRow operand="Inputs/Contact info" />
            <button className="flex h-[44px] items-center gap-[10px] pl-[2px] font-semibold text-[#5fca7e]">
              <Plus />
              Condition
            </button>
          </div>
        </div>
        <p className="mt-[49px] pl-[84px] text-[36px] leading-[46px] whitespace-pre text-[#e8432a]">{explanation}</p>
      </div>
    </div>
  );
}

export default function App() {
  return (
    <div className="bg-[#3a4a58]">
      <div className="relative flex h-screen w-full flex-col overflow-hidden rounded-b-[14px] bg-[#0a0a0a] antialiased [font-family:Inter,'Noto_Sans_CJK_SC',sans-serif]">
        <Header />
        <div className="flex min-h-0 flex-1">
          <Sidebar />
          <Canvas />
          <Inspector />
        </div>
        <Modal />
        <p className={`${note} top-[830px] left-[797px]`}>Add conditional to the sign up button</p>
        <span className="pointer-events-none absolute top-[895px] left-[866px] h-[237px] w-[498px] rounded-[8px] border-[5px] border-[#e8432a]" />
      </div>
    </div>
  );
}
